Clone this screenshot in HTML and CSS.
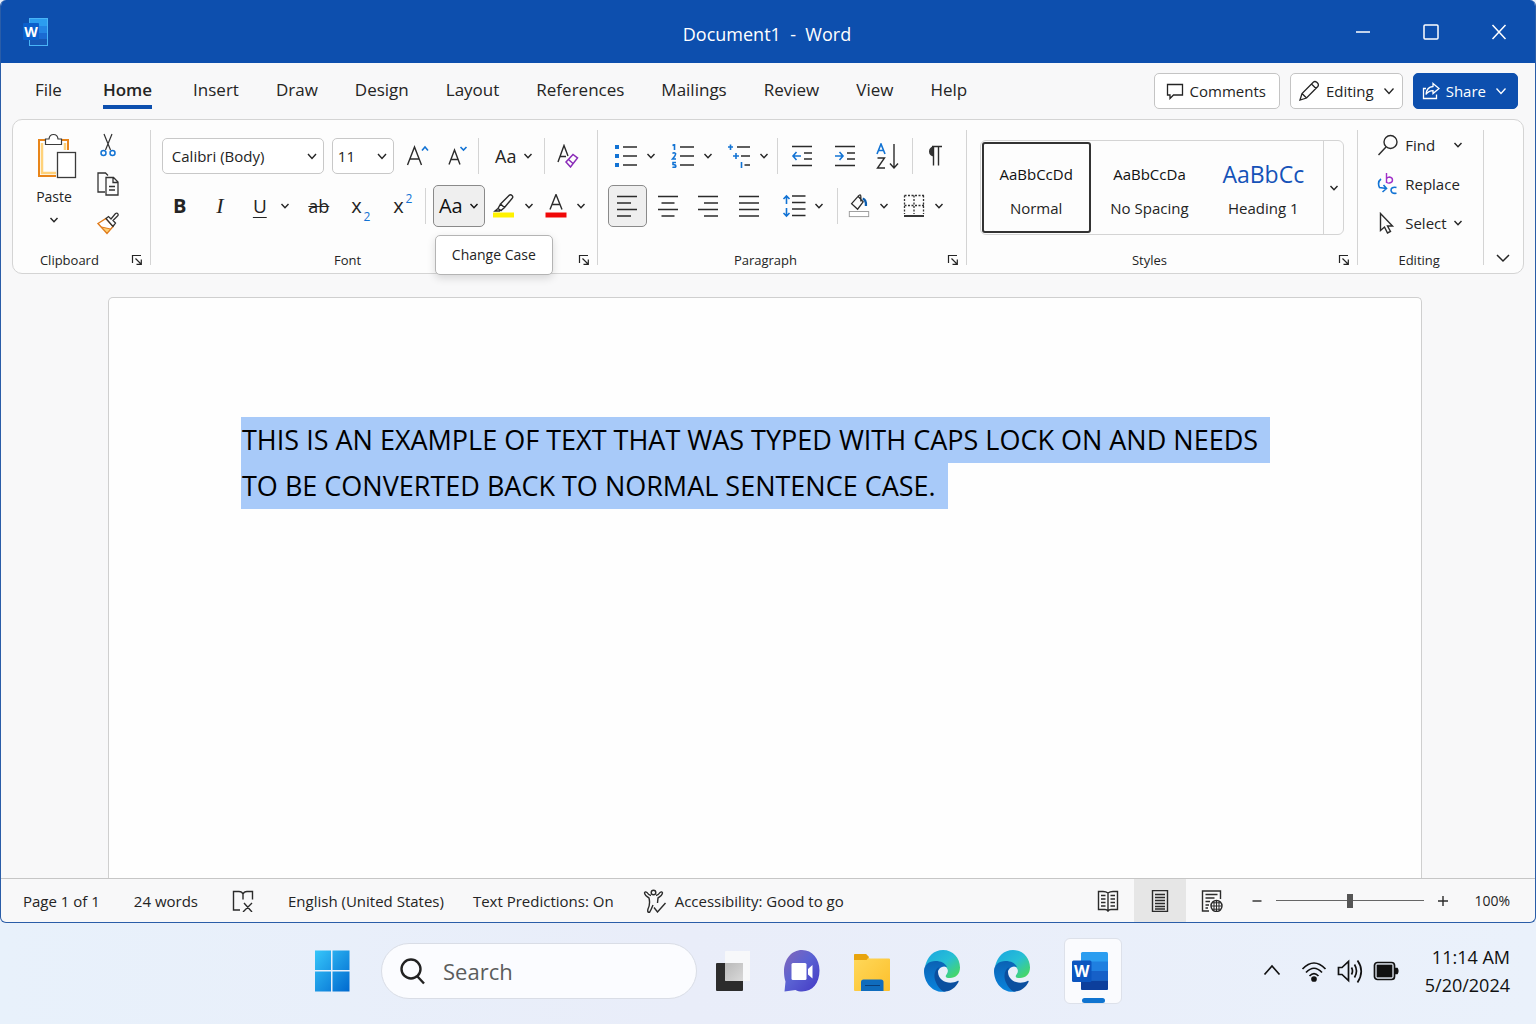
FILE: index.html
```html
<!DOCTYPE html>
<html lang="en">
<head>
<meta charset="utf-8">
<meta name="viewport" content="width=device-width, initial-scale=1">
<title>Document1 - Word</title>
<link rel="stylesheet" href="styles.css">
</head>
<body>
<svg class="defs" aria-hidden="true">
  <defs>
    <linearGradient id="g-win" x1="0" y1="0" x2="1" y2="1"><stop offset="0" stop-color="#36c6fa"/><stop offset="1" stop-color="#0069cf"/></linearGradient>
    <linearGradient id="g-chat" x1="0" y1="0" x2="1" y2="1"><stop offset="0" stop-color="#8567b8"/><stop offset=".45" stop-color="#5b63d3"/><stop offset="1" stop-color="#4338c4"/></linearGradient>
    <linearGradient id="g-folder" x1="0" y1="0" x2="1" y2="1"><stop offset="0" stop-color="#ffd95c"/><stop offset="1" stop-color="#fcc02c"/></linearGradient>
    <linearGradient id="g-edge-top" x1="0" y1="0" x2="1" y2="1"><stop offset="0" stop-color="#1aa5e0"/><stop offset=".5" stop-color="#27bfd6"/><stop offset="1" stop-color="#4fdc4c"/></linearGradient>
    <linearGradient id="g-edge-mid" x1="0" y1="0" x2="0" y2="1"><stop offset="0" stop-color="#0b62b4"/><stop offset="1" stop-color="#0a84dc"/></linearGradient>
    <linearGradient id="g-view" x1="0" y1="0" x2="1" y2="1"><stop offset="0" stop-color="#b9b9b9"/><stop offset="1" stop-color="#d9d9d9"/></linearGradient>
  </defs>
  <symbol id="chev" viewBox="0 0 10 10"><path d="M1.500 3 5 6.700 8.500 3" fill="none" stroke="currentColor" stroke-width="1.4"/></symbol>
  <symbol id="launch" viewBox="0 0 12 12"><path d="M1.500 9V1.500H10M4.500 4.500 10 10M10.300 5.500V10.300H5.500" fill="none" stroke="currentColor" stroke-width="1.200"/></symbol>
  <symbol id="edge" viewBox="0 0 36 42">
    <path d="M1 17C3 6.500 10 0 19 0 29 0 36 8 36 17.500 36 24.500 31 28.500 25 28 22 28 20.800 26.500 22.500 24.500 25.500 20.500 23.500 17 18 15 12 11 5 12 1 17Z" fill="url(#g-edge-top)"/>
    <path d="M0 21C0 15 5 11 11.500 11 17 11 21 13 23 17 17.500 14.500 12.500 20 13 26 13.500 33 17 39 22 41.500 9 44 0 33 0 21Z" fill="url(#g-edge-mid)"/>
    <path d="M15.500 17C10.500 19.500 9 26 12 32.500 14.500 38 18 41.500 21 41.600 27 41.300 32 37 34.500 32 35 31 34.300 30.500 33.500 31 26 35 14.500 32 14 22 14 20 14.500 18.500 15.500 17Z" fill="#0b4f9f"/>
  </symbol>
</svg>

<main class="window">
  <header class="titlebar">
    <svg class="app-icon" viewBox="0 0 25 28">
      <rect x="6.500" y=".5" width="18" height="27" fill="#2b9df0" stroke="#49b4f7"/>
      <path d="M7 8H24V15H7Z" fill="#2384e4"/><path d="M7 15H24V21H7Z" fill="#1a6ad2"/><path d="M7 21H24V27H7Z" fill="#1657b5"/>
      <rect x="0" y="5" width="16" height="17" rx="1" fill="#0a5fcc"/>
      <text x="8" y="19" text-anchor="middle" class="app-letter">W</text>
    </svg>
    <h1 class="doc-title">Document1&nbsp; -&nbsp; Word</h1>
    <div class="window-controls">
      <button aria-label="Minimize"><svg viewBox="0 0 18 18"><path d="M2 9H16"/></svg></button>
      <button aria-label="Maximize"><svg viewBox="0 0 18 18"><rect x="2" y="2" width="14" height="14" rx="1"/></svg></button>
      <button aria-label="Close"><svg viewBox="0 0 18 18"><path d="M2.500 2 15.500 16M15.500 2 2.500 16"/></svg></button>
    </div>
  </header>

  <nav class="menubar">
    <div class="tabs">
      <a href="#file">File</a><a href="#home" class="active" aria-current="page">Home</a><a href="#insert">Insert</a><a href="#draw">Draw</a><a href="#design">Design</a><a href="#layout">Layout</a><a href="#references">References</a><a href="#mailings">Mailings</a><a href="#review">Review</a><a href="#view">View</a><a href="#help">Help</a>
    </div>
    <div class="actions">
      <button class="action"><svg class="i18" viewBox="0 0 18 18"><path d="M1.500 2.500H16.500V13H7.500L4 16.500V13H1.500Z"/></svg>Comments</button>
      <button class="action"><svg class="i22" viewBox="0 0 22 22"><path d="M2 20 4 13.500 15.500 2Q17 .8 18.800 2.300L19.700 3.200Q21 5 19.800 6.500L8.500 18ZM13.500 4 18 8.500M4 13.500 8.500 18"/></svg>Editing<svg class="chev-lg" viewBox="0 0 12 12"><path d="M1.500 3.500 6 8.500 10.500 3.500"/></svg></button>
      <button class="action share"><svg class="i18" viewBox="0 0 18 18"><path d="M4 6.500H1.500V16.500H14.500V12.500M11 1.500 17 6.500 11 11.500V8.700C8 8.700 6 9.500 4 12.500 4.500 7.500 7 4.700 11 4.500Z"/></svg>Share<svg class="chev-lg" viewBox="0 0 12 12"><path d="M1.500 3.500 6 8.500 10.500 3.500"/></svg></button>
    </div>
  </nav>

  <section class="ribbon" aria-label="Home ribbon">
    <div class="group clipboard">
      <div class="clip-tools">
        <button class="paste">
          <svg viewBox="0 0 40 46"><path d="M8 7H2V43H19M25 7H31V17" fill="none" stroke="#e8851a" stroke-width="2"/><path d="M5 10V40H19M28 10V17" fill="none" stroke="#ffd27a" stroke-width="2.500"/><path d="M8.500 11.500V6H12Q12.500 1.500 16.500 1.500T21 6H24.500V11.500Z" fill="#fff" stroke="#3b3b3b" stroke-width="1.200"/><rect x="20.500" y="19.500" width="18" height="25" fill="#fff" stroke="#3b3b3b" stroke-width="1.300"/></svg>
          <span>Paste</span>
          <svg class="chev"><use href="#chev"/></svg>
        </button>
        <div class="clip-side">
          <button aria-label="Cut"><svg viewBox="0 0 22 24"><path d="M7 1 13.500 17M15 1 8.500 17" stroke="#333" stroke-width="1.200"/><g fill="none" stroke="#1273d4" stroke-width="1.500"><circle cx="6.500" cy="20" r="2.500"/><circle cx="15.500" cy="20" r="2.500"/></g></svg></button>
          <button aria-label="Copy"><svg viewBox="0 0 22 24"><path d="M8 20H1V1H8.500L11 3.500M9 5.500H16.500L21 10V23H9ZM16 5.500V10.500H21M12 14.500H18M12 18H18" fill="none" stroke="#333" stroke-width="1.300"/></svg></button>
          <button aria-label="Format Painter"><svg viewBox="0 0 22 24"><path d="M1 12.500 9 7.500 16 15.500 10 22.500Z" fill="#fff" stroke="#e07b1a" stroke-width="1.400"/><path d="M4.500 16 13.500 18 10 22Z" fill="#ffcf70" stroke="#e07b1a" stroke-width="1"/><path d="M9 7.500 11.500 5.500 14 8 18.500 2.500Q20 1.500 21 3 21.500 4 20.500 5L16 9.500 18.500 12 16 15.500Z" fill="#fff" stroke="#333" stroke-width="1.300"/></svg></button>
        </div>
      </div>
      <div class="group-foot"><h2>Clipboard</h2><button aria-label="Clipboard settings"><svg><use href="#launch"/></svg></button></div>
    </div>

    <div class="group font">
      <div class="row font-a">
        <div class="combo"><select aria-label="Font"><option>Calibri (Body)</option></select><svg class="chev-md" viewBox="0 0 12 12"><path d="M2 4 6 8.500 10 4"/></svg></div>
        <div class="combo"><select aria-label="Font size"><option>11</option></select><svg class="chev-md" viewBox="0 0 12 12"><path d="M2 4 6 8.500 10 4"/></svg></div>
        <button aria-label="Grow font"><svg class="i24" viewBox="0 0 24 24"><path d="M1.500 21 8.500 3 15.500 21M4 15H13" class="ink"/><path d="M16 6.500 19 3 22 6.500" class="blue"/></svg></button>
        <button aria-label="Shrink font"><svg class="i24" viewBox="0 0 24 24"><path d="M3 20.500 8.500 6 14 20.500M5 15.500H12" class="ink"/><path d="M14.500 3 17.500 6 20.500 3" class="blue"/></svg></button>
        <i class="sep"></i>
        <button class="aa">Aa<svg class="chev"><use href="#chev"/></svg></button>
        <i class="sep"></i>
        <button aria-label="Clear formatting"><svg class="i24" viewBox="0 0 24 24"><path d="M2 18 8 1.500 12 12M4 12.500H10" class="ink"/><path d="M10 18 17 10.500 21.500 14 14.500 23ZM12.500 15.500 17 19.500" fill="none" stroke="#8a2bb8" stroke-width="1.500"/></svg></button>
      </div>
      <div class="row font-b">
        <button class="bold">B</button>
        <button class="italic">I</button>
        <div class="split"><button class="under" aria-label="Underline">U</button><button class="drop" aria-label="Underline options"><svg class="chev"><use href="#chev"/></svg></button></div>
        <button class="strike">ab</button>
        <button class="script" aria-label="Subscript">x<sub>2</sub></button>
        <button class="script" aria-label="Superscript">x<sup>2</sup></button>
        <i class="sep"></i>
        <div class="tip-anchor">
          <button class="aa pressed" aria-describedby="case-tip">Aa<svg class="chev"><use href="#chev"/></svg></button>
          <span class="tooltip" id="case-tip" role="tooltip">Change Case</span>
        </div>
        <div class="split"><button aria-label="Highlight"><svg class="i24" viewBox="0 0 24 24"><path d="M8.500 10 17 1.500Q18.500 0 20 1.500 21.500 3 20 4.500L12.500 13.500ZM8.500 10 6 14.500 9 16.500 12.500 13.500M6 14.500 3 17H8" class="ink"/><path d="M1 18.500H22V23.500H1Z" fill="#fff200"/></svg></button><button class="drop" aria-label="Highlight options"><svg class="chev"><use href="#chev"/></svg></button></div>
        <div class="split"><button aria-label="Font color"><svg class="i24" viewBox="0 0 24 24"><path d="M6 15.500 12 .5 18 15.500M8 10.500H16" class="ink"/><path d="M1.500 18.500H22.500V23.500H1.500Z" fill="#f00808"/></svg></button><button class="drop" aria-label="Font color options"><svg class="chev"><use href="#chev"/></svg></button></div>
      </div>
      <div class="group-foot"><h2>Font</h2><button aria-label="Font settings"><svg><use href="#launch"/></svg></button></div>
    </div>

    <div class="group paragraph">
      <div class="row para-a">
        <div class="split"><button aria-label="Bullets"><svg class="i24" viewBox="0 0 24 24"><path d="M1 1H5V5H1ZM1 10H5V14H1ZM1 19H5V23H1Z" fill="#1273d4"/><path d="M9 3H23M9 12H23M9 21H23" class="ink"/></svg></button><button class="drop" aria-label="Bullet options"><svg class="chev"><use href="#chev"/></svg></button></div>
        <div class="split"><button aria-label="Numbering"><svg class="i24" viewBox="0 0 24 24"><path d="M1.500 1.500 3.500.5V6M1.500 9.500Q3 8 4.500 9.500 5 11 1.500 15H5M5 18.500H2V20.500Q5 20.500 4.800 22.500 4 24 1.500 23" class="blue"/><path d="M9 3H23M9 12H23M9 21H23" class="ink"/></svg></button><button class="drop" aria-label="Numbering options"><svg class="chev"><use href="#chev"/></svg></button></div>
        <div class="split"><button aria-label="Multilevel list"><svg class="i24" viewBox="0 0 24 24"><path d="M1 3H6M3.500.5V6M6 12H12M9 9V15M14.500 18V24" class="blue"/><path d="M10 3H23M14 12H23M17.500 21H23" class="ink"/></svg></button><button class="drop" aria-label="Multilevel options"><svg class="chev"><use href="#chev"/></svg></button></div>
        <i class="sep"></i>
        <button aria-label="Decrease indent"><svg class="i22" viewBox="0 0 22 22"><path d="M1 1.500H21M13 8H21M13 14H21M1 20.500H21" class="ink"/><path d="M10 11H2M5.500 7 2 11 5.500 15" class="blue"/></svg></button>
        <button aria-label="Increase indent"><svg class="i22" viewBox="0 0 22 22"><path d="M1 1.500H21M13 8H21M13 14H21M1 20.500H21" class="ink"/><path d="M1 11H9M5.500 7 9 11 5.500 15" class="blue"/></svg></button>
        <button aria-label="Sort"><svg class="i26" viewBox="0 0 26 26"><path d="M3 11 7 1 11 11M4.500 7.500H9.500" class="blue"/><path d="M3.500 15H10.500L3.500 25H11M20 1V25M16 20.500 20 25 24 20.500" class="ink"/></svg></button>
        <i class="sep"></i>
        <button aria-label="Show paragraph marks"><svg class="i22" viewBox="0 0 22 22"><path d="M9.500 1.500A4.500 5 0 0 0 9.500 11.500Z" fill="#333"/><path d="M8 1.500H18M9.500 1.500V20.500M14.500 1.500V20.500" class="ink"/></svg></button>
      </div>
      <div class="row para-b">
        <button class="pressed align" aria-label="Align left"><svg class="i22" viewBox="0 0 22 22"><path d="M1 1.500H21M1 8H15M1 14.500H21M1 21H15" class="ink"/></svg></button>
        <button aria-label="Center"><svg class="i22" viewBox="0 0 22 22"><path d="M1 1.500H21M4.500 8H17.500M1 14.500H21M4.500 21H17.500" class="ink"/></svg></button>
        <button aria-label="Align right"><svg class="i22" viewBox="0 0 22 22"><path d="M1 1.500H21M7 8H21M1 14.500H21M7 21H21" class="ink"/></svg></button>
        <button aria-label="Justify"><svg class="i22" viewBox="0 0 22 22"><path d="M1 1.500H21M1 8H21M1 14.500H21M1 21H21" class="ink"/></svg></button>
        <div class="split"><button aria-label="Line spacing"><svg class="i24" viewBox="0 0 24 24"><path d="M4.500 10V2M1.500 5 4.500 2 7.500 5M4.500 14V22M1.500 19 4.500 22 7.500 19" class="blue"/><path d="M10 2H23.500M10 8.500H23.500M10 15H23.500M10 21.500H23.500" class="ink"/></svg></button><button class="drop" aria-label="Spacing options"><svg class="chev"><use href="#chev"/></svg></button></div>
        <i class="sep"></i>
        <div class="split"><button aria-label="Shading"><svg class="i24" viewBox="0 0 24 26"><path d="M11 2.500 4 10.500 10.500 16.500 16.500 8.500ZM11 2.500Q14-1 14 3V8" class="ink"/><path d="M16 5Q20 6 19.500 13" fill="none" stroke="#0b5cad" stroke-width="2.500"/><rect x="1.500" y="19" width="21" height="5.500" fill="#fff" stroke="#999"/></svg></button><button class="drop" aria-label="Shading options"><svg class="chev"><use href="#chev"/></svg></button></div>
        <div class="split"><button aria-label="Borders"><svg class="i24" viewBox="0 0 24 24"><path d="M2.500 1.500H22M2.500 1.500V20M21.500 1.500V20M12 1.500V20M2.500 11.500H22" fill="none" stroke="#333" stroke-width="1.300" stroke-dasharray="2 1.500"/><path d="M2 22H22" stroke="#222" stroke-width="1.800"/></svg></button><button class="drop" aria-label="Border options"><svg class="chev"><use href="#chev"/></svg></button></div>
      </div>
      <div class="group-foot"><h2>Paragraph</h2><button aria-label="Paragraph settings"><svg><use href="#launch"/></svg></button></div>
    </div>

    <div class="group styles">
      <div class="gallery">
        <button class="style selected"><span class="sample">AaBbCcDd</span><span>Normal</span></button>
        <button class="style"><span class="sample">AaBbCcDa</span><span>No Spacing</span></button>
        <button class="style"><span class="sample heading">AaBbCc</span><span>Heading 1</span></button>
        <button class="more" aria-label="More styles"><svg class="chev"><use href="#chev"/></svg></button>
      </div>
      <div class="group-foot"><h2>Styles</h2><button aria-label="Styles settings"><svg><use href="#launch"/></svg></button></div>
    </div>

    <div class="group editing">
      <div class="edit-list">
        <button><svg class="i22" viewBox="0 0 22 22"><circle cx="13.500" cy="8" r="6.500" class="ink"/><path d="M9 13 1.500 21" class="ink"/></svg><span>Find</span><svg class="chev far"><use href="#chev"/></svg></button>
        <button><svg class="i22" viewBox="0 0 22 22"><path d="M9.500 0V10M9.500 6Q10 4 12.500 4 15.500 4.500 15.500 7T12.500 10 9.500 8" fill="none" stroke="#a030c8" stroke-width="1.400"/><path d="M4 6Q0 9 2.500 14.500L9.500 15.500M6.500 12 9.500 15.500 5.500 19M19.500 14.500Q14 13.500 14 17.500 14.500 21 19.500 20.300" class="blue"/></svg><span>Replace</span></button>
        <button><svg class="i22" viewBox="0 0 22 22"><path d="M3.500 1.500V18.500L7.500 15 10.500 21 13.500 19.500 10.500 14H15.500Z" class="ink"/></svg><span>Select</span><svg class="chev"><use href="#chev"/></svg></button>
      </div>
      <div class="group-foot"><h2>Editing</h2></div>
    </div>
    <div class="group collapse"><button aria-label="Collapse ribbon"><svg viewBox="0 0 16 16"><path d="M2 5 8 11 14 5"/></svg></button></div>
  </section>

  <div class="workspace">
    <article class="page">
      <p><mark>THIS IS AN EXAMPLE OF TEXT THAT WAS TYPED WITH CAPS LOCK ON AND NEEDS</mark> <mark>TO BE CONVERTED BACK TO NORMAL SENTENCE CASE.</mark></p>
    </article>
  </div>

  <footer class="statusbar">
    <span class="s-page">Page 1 of 1</span>
    <span class="s-words">24 words</span>
    <button class="s-proof" aria-label="Proofing"><svg class="i22" viewBox="0 0 22 22"><path d="M8 20H1.500V1.500H7Q10 1.500 11 4 12 1.500 15 1.500H20.500V9.500M11 4V9.500M12 13 20 22M20 13 11 22" class="ink"/></svg></button>
    <span class="s-lang">English (United States)</span>
    <span class="s-pred">Text Predictions: On</span>
    <span class="s-access"><svg class="i24" viewBox="0 0 24 24"><circle cx="10.500" cy="3.500" r="2.300" class="ink"/><path d="M8 6.500Q5.500 6 4 3.500 2 2 1.500 4 2 7 6 9 7.500 15 5 20 4 23.500 6.500 23.500 8.500 20 10 16M13 6.500Q15.500 6 17 3.500 19 2 19.500 4 19 7 15 9L14.500 14M11 18.500 14.500 23 22.500 14" class="ink"/></svg>Accessibility: Good to go</span>
    <div class="views">
      <button aria-label="Read mode"><svg class="i22" viewBox="0 0 22 22"><path d="M11 3Q9 1.500 6 1.500H1.500V19.500H8Q10 19.500 11 21 12 19.500 14 19.500H20.500V1.500H16Q13 1.500 11 3ZM11 3V21M4 5.500H8.500M4 9H8.500M4 12.500H8.500M4 16H8.500M13.500 5.500H18M13.500 9H18M13.500 12.500H18M13.500 16H18" class="ink"/></svg></button>
      <button class="current" aria-label="Print layout"><svg class="i22" viewBox="0 0 22 22"><path d="M3.500 .5H18.500V21.500H3.500ZM6 4.500H16M6 7.500H16M6 10.500H16M6 13.500H16M6 16.500H16M6 19H16" class="ink"/></svg></button>
      <button aria-label="Web layout"><svg class="i22" viewBox="0 0 22 22"><path d="M8 21H1.500V1H19.500V9M4.500 4.500H16.500M4.500 8H13.500M4.500 11.500H9M4.500 15H8M4.500 18H7" class="ink"/><circle cx="15.500" cy="16" r="5.500" class="ink"/><path d="M10 16H21M15.500 10.500V21.500M11.500 12.800H19.500M11.500 19.200H19.500M13 11.500V20.500M18 11.500V20.500" class="ink thin"/></svg></button>
    </div>
    <div class="zoom">
      <button aria-label="Zoom out"><svg viewBox="0 0 12 12"><path d="M1.500 6H10.500" class="ink"/></svg></button>
      <input type="range" min="0" max="200" value="100" aria-label="Zoom">
      <button aria-label="Zoom in"><svg viewBox="0 0 12 12"><path d="M1 6H11M6 1V11" class="ink"/></svg></button>
      <span>100%</span>
    </div>
  </footer>
</main>

<nav class="taskbar" aria-label="Taskbar">
  <button class="task" aria-label="Start"><svg viewBox="0 0 36 42"><path d="M1 .5H17V20H1ZM18.500.5H35.500V20H18.500ZM1 21.500H17V41.500H1ZM18.500 21.500H35.500V41.500H18.500Z" fill="url(#g-win)"/></svg></button>
  <label class="search"><svg viewBox="0 0 28 28"><circle cx="12" cy="12" r="9.500"/><path d="M18.500 19.500 25 26.500"/></svg><input type="search" placeholder="Search" aria-label="Search"></label>
  <button class="task" aria-label="Task view"><svg viewBox="0 0 36 42"><rect x="2" y="13" width="27" height="28" rx="1" fill="#2c2c2c"/><rect x="11" y="1" width="26" height="30" rx="1" fill="#f8f8fa" opacity=".9"/><path d="M11 13H29V31H13Q11 31 11 29Z" fill="url(#g-view)"/></svg></button>
  <button class="task" aria-label="Chat"><svg viewBox="0 0 36 42"><path d="M18 0C28.500 0 35.500 9 35.500 20.500 35.500 33 28.500 41.500 18 41.500 15.500 41.500 13.500 41 11.500 40L.5 41.500 1.500 31.500C-3.500 15 4.500 0 18 0Z" fill="url(#g-chat)"/><rect x="7.500" y="13" width="15" height="17" rx="1.500" fill="#fff"/><path d="M24 19 28.500 15V28.500L24 24.500Z" fill="#fff"/></svg></button>
  <button class="task" aria-label="File Explorer"><svg viewBox="0 0 36 42"><path d="M0 5A1 1 0 0 1 1 4H12L15.500 8.500H35A1 1 0 0 1 36 9.500V40A1 1 0 0 1 35 41H1A1 1 0 0 1 0 40Z" fill="url(#g-folder)"/><path d="M0 10V5A1 1 0 0 1 1 4H12L15 7 12.500 10Z" fill="#e8a40e"/><path d="M7 41V32Q7 29.500 9.500 29.500H27Q29.500 29.500 29.500 32V41Z" fill="#0f6cbd"/><path d="M11 35.500H26" stroke="#0a3f7a"/></svg></button>
  <button class="task" aria-label="Edge"><svg><use href="#edge"/></svg></button>
  <button class="task" aria-label="Edge, second window"><svg><use href="#edge"/></svg></button>
  <button class="task running" aria-label="Word"><svg viewBox="0 0 36 38">
    <rect x="9" y="0" width="27" height="38" rx="1.500" fill="#2b9df0"/>
    <path d="M9 9.500H36V19H9Z" fill="#1f7fe0"/><path d="M9 19H36V28.500H9Z" fill="#1660c8"/>
    <path d="M9 28.500H36V36.500A1.500 1.500 0 0 1 34.500 38H10.500A1.500 1.500 0 0 1 9 36.500Z" fill="#0c3f9c"/>
    <rect x="0" y="8.500" width="19.500" height="21.500" rx="1.500" fill="#0b55bf"/>
    <text x="9.700" y="24.500" text-anchor="middle" class="app-letter">W</text>
  </svg></button>
  <div class="tray">
    <button aria-label="Show hidden icons"><svg viewBox="0 0 26 26"><path d="M5.500 16.500 13 8 20.500 16.500"/></svg></button>
    <button aria-label="Network"><svg viewBox="0 0 26 26"><path d="M1.500 11Q13-1 24.500 11M5 14.500Q13 6 21 14.500M8.500 18Q13 13.500 17.500 18"/><circle cx="13" cy="21" r="2" fill="#111"/></svg></button>
    <button aria-label="Volume"><svg viewBox="0 0 26 26"><path d="M1.500 9.500H5L11.500 3.500V22.500L5 16.500H1.500ZM14.500 9.500Q16.500 13 14.500 16.500M17.500 6.500Q21.500 13 17.500 19.500M20.500 2.500Q28 13 20.500 24.500"/></svg></button>
    <button aria-label="Battery"><svg viewBox="0 0 26 26"><rect x="1.500" y="4.500" width="20" height="17" rx="3"/><rect x="4.500" y="7.500" width="14" height="11" fill="#111"/><path d="M22.500 10.500H24Q25.500 13 24 15.500H22.500Z" fill="#111"/></svg></button>
    <time datetime="2024-05-20T11:14"><span>11:14 AM</span><span>5/20/2024</span></time>
  </div>
</nav>
</body>
</html>
```
FILE: styles.css
```css
:root {
  --blue: #0d4fae;
  --ink: #242424;
  --line: #d4d4d4;
  --accent: #1273d4;
}
* { box-sizing: border-box; }
body {
  margin: 0;
  min-height: 100vh;
  display: flex;
  flex-direction: column;
  background: #e9f0fa;
  color: var(--ink);
  font: 15px/20px "Open Sans", "Noto Sans", sans-serif;
}
.defs { position: absolute; width: 0; height: 0; }
h1, h2, p { margin: 0; font-weight: 400; }
button {
  display: flex;
  align-items: center;
  justify-content: center;
  padding: 0;
  border: 0;
  background: none;
  color: inherit;
  font: inherit;
}
svg { display: block; flex: none; fill: none; }
.ink { fill: none; stroke: #2b2b2b; stroke-width: 1.4; }
.thin { stroke-width: 1; }
.blue { fill: none; stroke: var(--accent); stroke-width: 1.6; }
.i18 { width: 18px; height: 18px; }
.i22 { width: 22px; height: 22px; }
.i24 { width: 24px; height: 24px; }
.i26 { width: 26px; height: 26px; }
.chev { width: 10px; height: 10px; }
.chev-md, .chev-lg { width: 12px; height: 12px; stroke: currentColor; stroke-width: 1.4; }
.app-letter { fill: #fff; font: 700 14px "Open Sans", sans-serif; }
.running .app-letter { font-size: 16px; }

.window {
  flex: 1;
  display: flex;
  flex-direction: column;
  border: 1px solid #2a5da8;
  border-top: 0;
  border-radius: 6px;
  background: #f8f8f9;
  overflow: hidden;
}

.titlebar {
  display: grid;
  grid-template-columns: 1fr auto 1fr;
  align-items: center;
  height: 63px;
  padding-right: 2px;
  background: var(--blue);
  color: #fff;
}
.app-icon { width: 25px; height: 28px; margin-left: 22px; }
.doc-title { font-size: 18px; line-height: 24px; padding-top: 4px; }
.window-controls { justify-self: end; display: flex; }
.window-controls button { width: 68px; height: 60px; }
.window-controls svg { width: 18px; height: 18px; stroke: #fff; stroke-width: 1.5; }

.menubar {
  display: flex;
  justify-content: space-between;
  align-items: center;
  height: 56px;
  padding: 0 17px 0 34px;
}
.tabs { display: flex; gap: 37px; font-size: 17px; line-height: 24px; }
.tabs a { padding: 4px 0 3px; border-bottom: 4px solid transparent; color: inherit; text-decoration: none; }
.tabs .active { margin: 0 4px; border-color: var(--blue); font-weight: 600; }
.actions { display: flex; gap: 10px; }
.action {
  gap: 6px;
  height: 36px;
  padding: 0 13px 0 11px;
  border: 1px solid #c4c4c4;
  border-radius: 5px;
  background: #fff;
}
.action svg { stroke: currentColor; stroke-width: 1.3; }
.action .chev-lg { margin-left: 3px; }
.action + .action { padding: 0 7px; }
.action.share { padding: 0 10px 0 8px; border-color: var(--blue); background: var(--blue); color: #fff; }

.ribbon {
  display: grid;
  grid-template-columns: 137fr 448fr 369fr 392fr 126fr 40fr;
  margin: 0 11px;
  height: 155px;
  border: 1px solid var(--line);
  border-radius: 10px;
  background: #fdfdfd;
}
.group { position: relative; display: flex; flex-direction: column; padding: 17px 0 3px; }
.group + .group::before {
  content: "";
  position: absolute;
  left: 0;
  top: 10px;
  bottom: 8px;
  width: 1px;
  background: var(--line);
}
.group-foot { display: flex; align-items: center; margin-top: auto; height: 20px; padding-right: 2px; }
.group-foot h2 { flex: 1; font-size: 13px; line-height: 20px; text-align: center; }
.group-foot button { width: 22px; height: 20px; }
.group-foot svg { width: 12px; height: 12px; }
.font .group-foot h2 { padding-right: 28px; }
.paragraph .group-foot h2 { padding-right: 8px; }

.group.clipboard { padding-top: 13px; }
.clip-tools { display: flex; padding-left: 19px; gap: 19px; }
.paste { flex-direction: column; width: 44px; height: 92px; font-size: 14px; }
.paste svg:first-child { width: 40px; height: 46px; margin: 0 0 8px 5px; }
.paste .chev { margin-top: 8px; }
.clip-side { display: flex; flex-direction: column; gap: 15px; }
.clip-side button { width: 26px; height: 24px; }
.clip-side svg { width: 22px; height: 24px; }

.row { display: grid; align-items: center; justify-items: center; }
.font-a, .para-a { height: 37px; }
.font-b, .para-b { height: 42px; margin-top: 11px; }
.font-a { grid-template-columns: 162px 70px 48px 32px 10px 60px 2px 44px; padding-left: 12px; }
.font-b { grid-template-columns: 40px 40px 58px 42px 42px 42px 4px 62px 46px 58px; padding-left: 10px; font-size: 20px; }
.para-a { grid-template-columns: 56px 58px 54px 4px 46px 40px 44px 6px 40px; padding-left: 10px; }
.para-b { grid-template-columns: 40px 41px 40px 42px 66px 2px 60px 50px; padding-left: 10px; }
.sep { width: 1px; height: 36px; background: var(--line); }
.split { display: flex; align-items: center; gap: 8px; }
.split > button:first-child { width: 24px; height: 36px; }
.drop { height: 36px; }

.combo { display: grid; align-items: center; width: 100%; height: 36px; border: 1px solid #c8c8c8; border-radius: 5px; background: #fff; }
.combo + .combo { width: 62px; justify-self: end; }
.combo select, .combo svg { grid-area: 1 / 1; }
.combo select { width: 100%; height: 34px; padding: 0 9px; border: 0; background: none; appearance: none; color: inherit; font: inherit; }
.combo + .combo select { padding: 0 5px; }
.combo svg { justify-self: end; margin-right: 5px; pointer-events: none; }

.aa { gap: 6px; font-size: 18px; }
.pressed { border: 1px solid #8a8a8a; border-radius: 5px; background: #efefef; }
.aa.pressed { width: 52px; height: 42px; font-size: 20px; color: #111; }
.align { width: 39px; height: 42px; }
.bold { font-weight: 700; }
.italic { font-family: "Liberation Serif", serif; font-style: italic; font-size: 22px; }
.under { text-decoration: underline; text-decoration-thickness: 1px; text-underline-offset: 4px; font-size: 19px; }
.strike { text-decoration: line-through; text-decoration-thickness: 1px; font-size: 18px; }
.script { gap: 2px; }
.script sub, .script sup { font-size: 12px; line-height: 12px; color: var(--accent); }
.script sub { align-self: flex-end; margin-bottom: -7px; }
.script sup { align-self: flex-start; margin-top: -3px; }

.tip-anchor { position: relative; }
.tooltip {
  position: absolute;
  z-index: 2;
  left: 2px;
  top: 50px;
  padding: 9px 16px;
  border: 1px solid #b4b4b4;
  border-radius: 5px;
  background: #fff;
  box-shadow: 0 3px 8px rgba(0, 0, 0, .14);
  font-size: 14px;
  line-height: 20px;
  white-space: nowrap;
}

.gallery {
  display: grid;
  grid-template-columns: 111fr 116fr 112fr 24px;
  height: 95px;
  margin: 3px 13px 0 14px;
  border: 1px solid var(--line);
  border-radius: 6px;
}
.style { flex-direction: column; gap: 14px; padding-top: 6px; }
.style.selected { margin: 1px; border: 2px solid #333; border-radius: 3px; }
.sample { font-size: 15px; color: #111; }
.sample.heading { font-size: 23px; color: #1552b8; }
.more { margin-left: 4px; border-left: 1px solid var(--line); }

.group.editing { padding-top: 14px; }
.edit-list { display: flex; flex-direction: column; gap: 17px; padding-left: 20px; }
.edit-list button { justify-content: flex-start; gap: 6px; height: 22px; }
.edit-list .far { margin-left: 12px; }
.collapse { justify-content: flex-end; align-items: center; }
.collapse svg { width: 16px; height: 16px; margin-bottom: 4px; stroke: var(--ink); stroke-width: 1.5; }

.workspace { flex: 1; display: flex; padding: 23px 113px 0 107px; }
.page {
  flex: 1;
  padding: 119px 92px 40px 132px;
  border: 1px solid #cfcfcf;
  border-bottom: 0;
  border-radius: 5px 5px 0 0;
  background: #fefefe;
}
.page p { font-size: 27px; line-height: 46px; color: #000; }
.page mark { display: block; width: fit-content; padding: 0 12px 0 1px; background: #a8caf9; color: inherit; white-space: nowrap; }

.statusbar {
  display: flex;
  align-items: center;
  height: 44px;
  padding: 0 25px 0 22px;
  border-top: 1px solid #c6c6c6;
}
.s-words, .s-proof, .s-lang { margin-left: 34px; }
.s-pred, .s-access { margin-left: 29px; }
.s-access { display: flex; align-items: center; gap: 8px; }
.views { display: flex; align-self: stretch; margin-left: auto; }
.views button { width: 52px; }
.views .current { background: #e6e6e6; }
.zoom { display: flex; align-items: center; margin-left: 12px; }
.zoom button { width: 14px; height: 24px; }
.zoom svg { width: 12px; height: 12px; }
.zoom input { width: 148px; height: 20px; margin: 0 12px; appearance: none; background: none; }
.zoom input::-webkit-slider-runnable-track { height: 14px; background: linear-gradient(#666, #666) center / 100% 1px no-repeat; }
.zoom input::-webkit-slider-thumb { appearance: none; width: 6px; height: 14px; background: #555; }
.zoom span { margin-left: 24px; font-size: 14px; }

.taskbar {
  display: flex;
  align-items: center;
  height: 101px;
  padding: 0 26px 5px 314px;
  gap: 34px;
  background: linear-gradient(90deg, #e8f1fb, #e9edf9 45%, #eaf1fb);
}
.task { width: 36px; height: 42px; }
.task svg { width: 36px; height: 42px; }
.search {
  display: flex;
  align-items: center;
  gap: 16px;
  width: 316px;
  height: 56px;
  margin: 0 -17px 0 -3px;
  padding: 0 17px;
  border: 1px solid #d9dde6;
  border-radius: 28px;
  background: #fbfcff;
}
.search svg { width: 28px; height: 28px; stroke: #222; stroke-width: 2.4; }
.search input { flex: 1; min-width: 0; padding: 0; border: 0; background: none; font: inherit; font-size: 22px; line-height: 30px; }
.search input::placeholder { color: #5c5c5c; opacity: 1; }
.task.running { position: relative; width: 58px; height: 66px; border: 1px solid #dde1ea; border-radius: 6px; background: #fafbfe; }
.task.running svg { width: 36px; height: 38px; margin-right: 6px; }
.task.running::after {
  content: "";
  position: absolute;
  left: 17px;
  bottom: 0;
  width: 23px;
  height: 5px;
  border-radius: 3px;
  background: #0f74d0;
}
.tray { display: flex; align-items: center; gap: 10px; margin-left: auto; }
.tray svg { width: 26px; height: 26px; stroke: #111; stroke-width: 1.7; }
.tray button:first-child { margin-right: 6px; }
.tray time { display: flex; flex-direction: column; align-items: flex-end; margin-left: 16px; font-size: 18px; line-height: 28px; color: #111; }
```
